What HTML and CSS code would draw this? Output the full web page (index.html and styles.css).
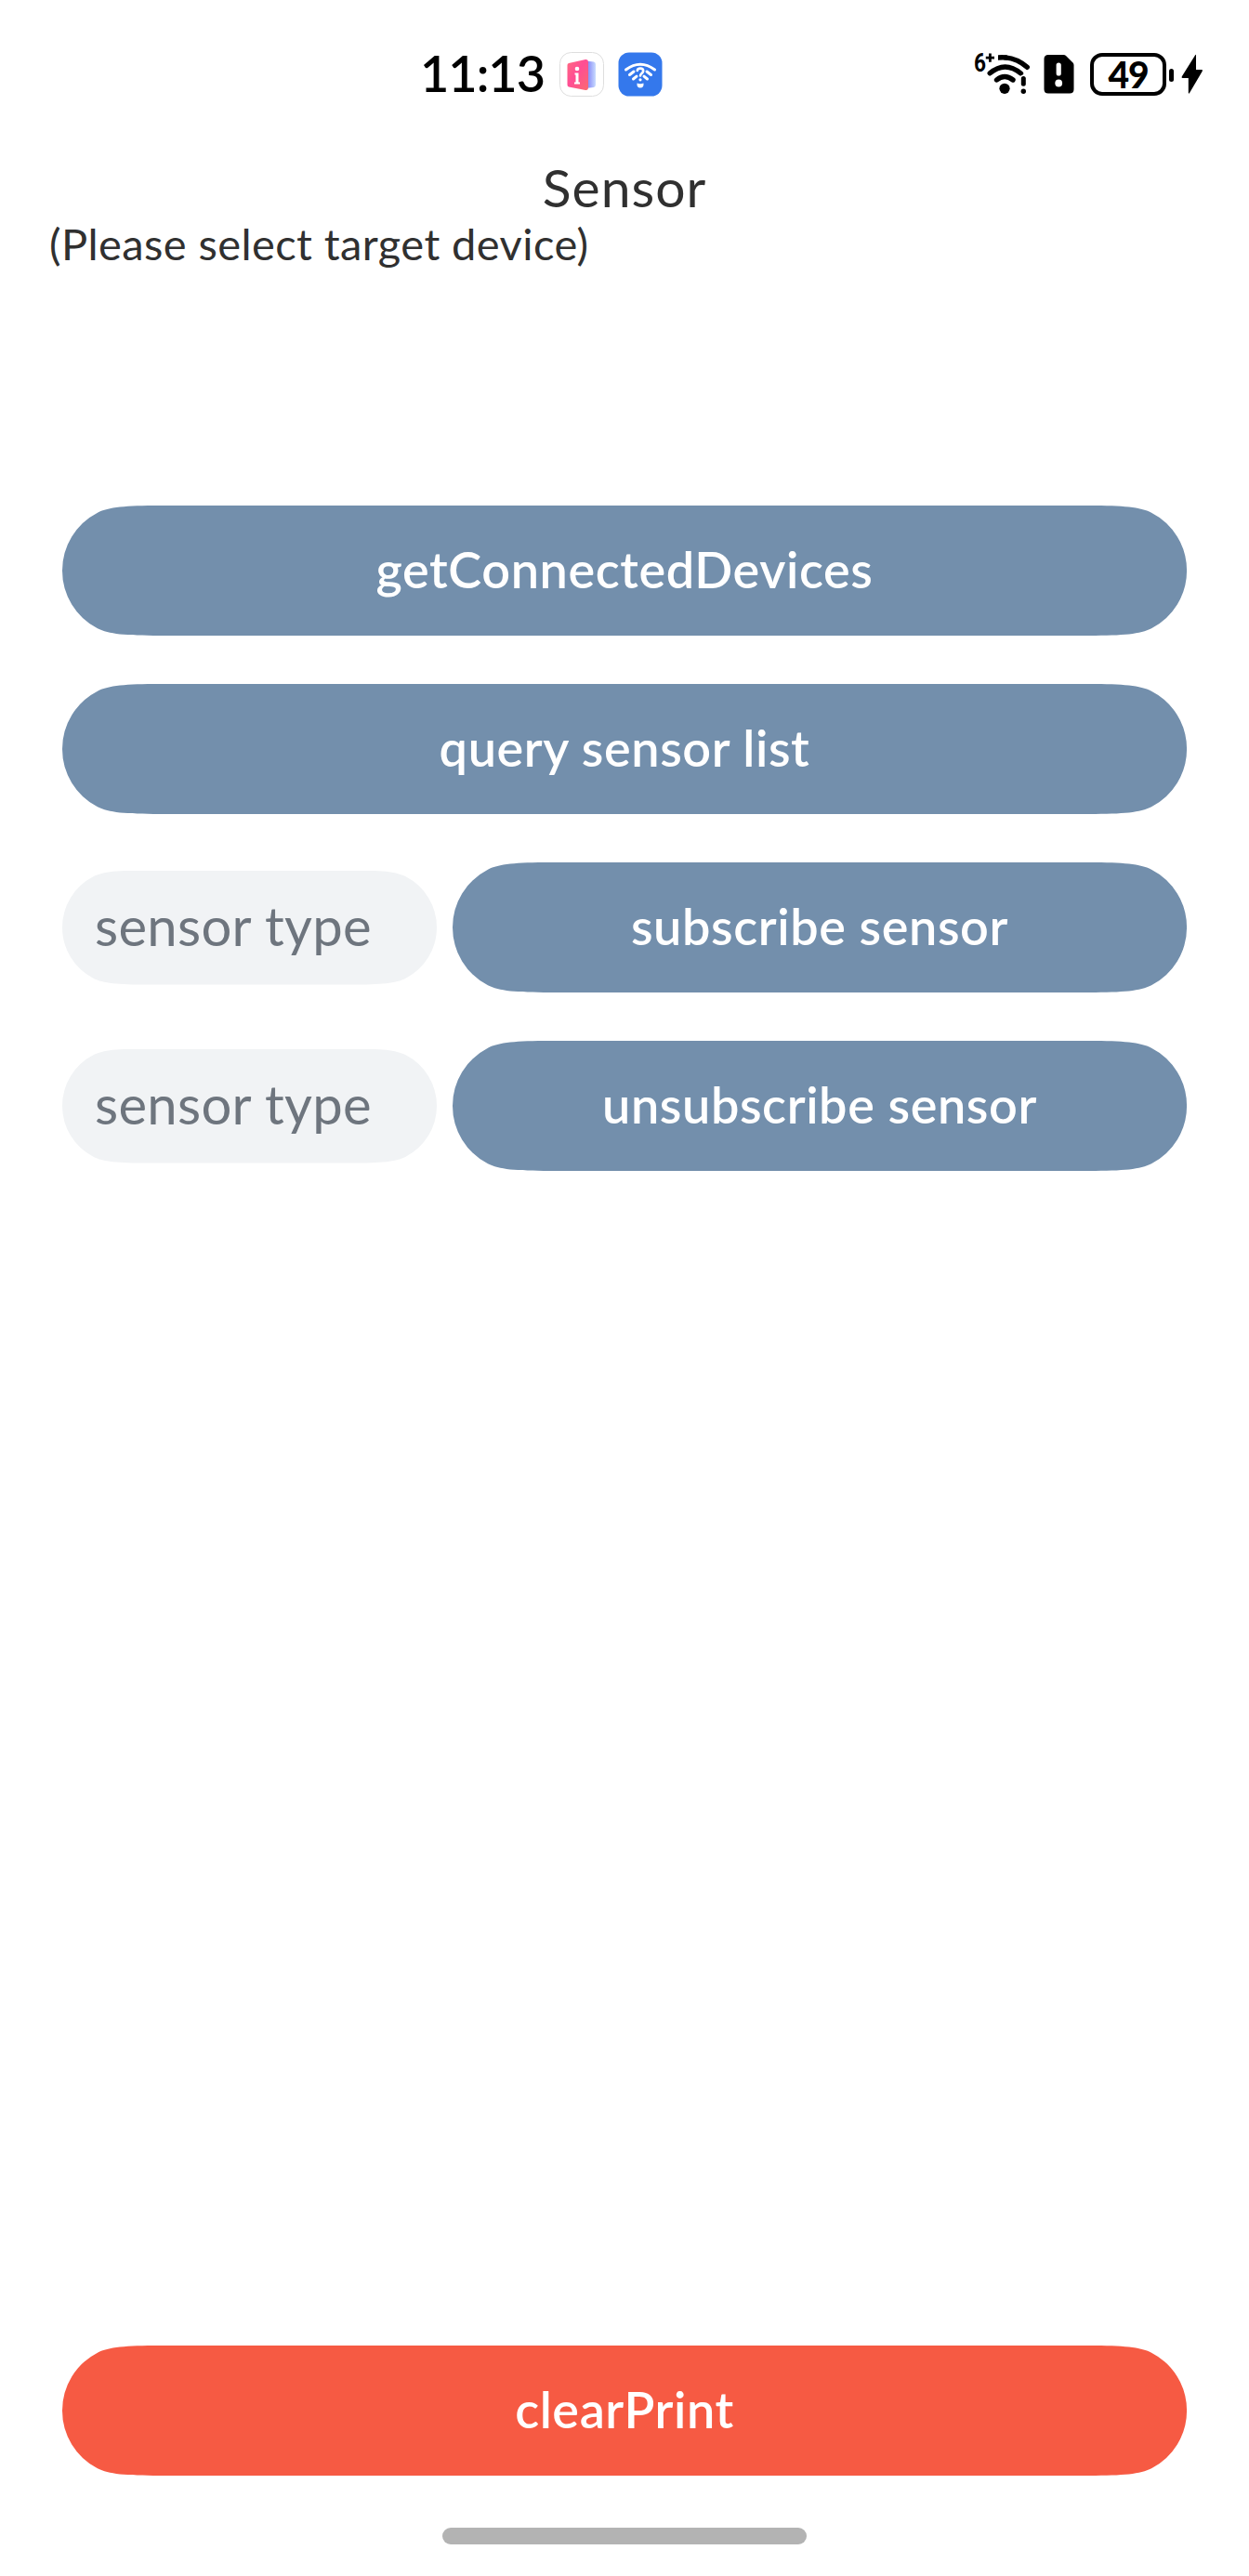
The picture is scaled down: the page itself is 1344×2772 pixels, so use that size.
FILE: index.html
```html
<!DOCTYPE html>
<html lang="en">
<head>
<meta charset="utf-8">
<title>Sensor</title>
<link rel="stylesheet" href="styles.css">
</head>
<body>
<header class="status">
  <div class="status-left">
    <span class="time">11:13</span>
    <svg class="app-icon" width="48" height="48" viewBox="0 0 48 48">
      <defs>
        <linearGradient id="pink" x1="0" y1="0" x2="1" y2="1"><stop offset="0" stop-color="#ff6b80"/><stop offset=".45" stop-color="#ff4d94"/><stop offset="1" stop-color="#fa6a70"/></linearGradient>
        <linearGradient id="violet" x1="0" x2="1"><stop offset="0" stop-color="#7470f4"/><stop offset="1" stop-color="#c9dcff"/></linearGradient>
      </defs>
      <rect x=".5" y=".5" width="47" height="47" rx="12" fill="#fff" stroke="#dedede"/>
      <path d="M28 9.500L37 10.500Q39 11 39 13V35Q39 37.500 37 38L28 39Z" fill="url(#violet)"/>
      <path d="M10 12L28 8Q31 7.500 31 10.500V38Q31 41.500 28 41L10 37.500Q8.500 37 8.500 35V14Q8.500 12.500 10 12Z" fill="url(#pink)"/>
      <circle cx="19" cy="18" r="2.300" fill="#fff"/>
      <path d="M16.500 22.500H20.500V32.500H22V34.500H16V32.500H17.500V24.500H16.500Z" fill="#fff"/>
    </svg>
    <svg class="app-icon" width="48" height="48" viewBox="0 0 48 48">
      <rect x=".5" y=".5" width="47" height="47" rx="11.500" fill="#3478ec"/>
      <g fill="none" stroke="#fff" stroke-width="3" stroke-linecap="round">
        <path d="M8.500 19Q24 7.500 39.500 19"/>
        <path d="M12.500 24.500L17 21M16.500 29L20 26.200M35.500 24.500L31 21M31.500 29L28 26.200"/>
        <path d="M20.800 20C21 16.800 27.200 16.800 27.200 20.300C27.200 23 24 23 24 25.500" stroke-width="2.600"/>
      </g>
      <circle cx="24" cy="29.800" r="1.600" fill="#fff"/>
      <path d="M20.500 33.500Q24 35 27.500 33.500Q28 38.500 24 38.500T20.500 33.500Z" fill="#fff"/>
    </svg>
  </div>
  <div class="status-right">
    <svg width="70" height="60" viewBox="4 0 70 60">
      <text class="wifi-gen" x="8" y="27" textLength="13" lengthAdjust="spacingAndGlyphs">6</text>
      <path d="M20.800 12.200H30M25.400 7.600V16.800" stroke="#000" stroke-width="2.800"/>
      <g fill="none" stroke="#000" stroke-width="5.400" stroke-linecap="round">
        <path d="M32.500 36Q41 29 50 36"/>
        <path d="M25.200 28.800Q41.500 15 58.500 29"/>
        <path d="M42 11.900Q55 13.200 65.300 22.300"/>
      </g>
      <path d="M34 9.300Q39 8.900 44 9.400V14.800Q39 14.200 34 14.800Z"/>
      <circle cx="41" cy="45.300" r="5.600"/>
      <path d="M61.300 34V40" stroke="#fff" stroke-width="7" stroke-linecap="round"/>
      <path d="M61.300 34.500V40.300" stroke="#000" stroke-width="5" stroke-linecap="round"/>
      <circle cx="61.300" cy="48.200" r="2.700"/>
    </svg>
    <svg class="sim" width="33" height="42" viewBox="0 0 33 42">
      <path d="M5 0H21.500Q23 0 24 1L31.500 8.500Q32.500 9.500 32.500 11V37Q32.500 41.500 28 41.500H5Q.5 41.500 .5 37V4.500Q.5 0 5 0Z"/>
      <path d="M16.200 11V20" stroke="#fff" stroke-width="5.200" stroke-linecap="round"/>
      <circle cx="16.200" cy="30.500" r="3.900" fill="#fff"/>
    </svg>
    <div class="battery">49</div>
    <div class="battery-tip"></div>
    <svg class="bolt" width="24" height="44" viewBox="0 0 24 44">
      <path d="M15 1.500Q16 0 16 2V17H22Q23.700 17 22.700 18.700L9 42Q7.800 43.500 7.800 41.500V26H1.500Q0 26 .8 24.300Z"/>
    </svg>
  </div>
</header>
<main class="page">
  <h1 class="title">Sensor</h1>
  <p class="hint">(Please select target device)</p>
  <div class="actions">
    <button class="btn wide">getConnectedDevices</button>
    <button class="btn wide">query sensor list</button>
    <div class="row">
      <input class="field" type="text" placeholder="sensor type">
      <button class="btn narrow">subscribe sensor</button>
    </div>
    <div class="row">
      <input class="field" type="text" placeholder="sensor type">
      <button class="btn narrow">unsubscribe sensor</button>
    </div>
    <button class="btn wide clear">clearPrint</button>
  </div>
</main>
<div class="home-bar"></div>
</body>
</html>
```
FILE: styles.css
```css
* { box-sizing: border-box; }
body {
  margin: 0;
  width: 1344px;
  height: 2772px;
  display: flex;
  flex-direction: column;
  align-items: center;
  background: #fff;
  font-family: Lato, "Open Sans", sans-serif;
  overflow: hidden;
}

.status {
  width: 100%;
  height: 168px;
  padding: 50px 49px 0 452px;
  display: flex;
  justify-content: space-between;
  align-items: flex-start;
}
.status-left, .status-right { display: flex; height: 60px; align-items: center; }
.time {
  width: 150px;
  font-size: 54px;
  font-weight: 600;
  line-height: 60px;
  letter-spacing: -1px;
  padding-bottom: 3px;
  color: #000;
}
.app-icon { margin-right: 15px; }
.wifi-gen { font: 700 28px Roboto, sans-serif; }
.sim { margin-left: 9px; }
.battery {
  margin-left: 17px;
  width: 82px;
  height: 46px;
  border: 4px solid #000;
  border-radius: 13px;
  text-align: center;
  font-size: 39px;
  font-weight: 900;
  line-height: 39px;
  letter-spacing: -1px;
  color: #000;
}
.battery-tip { width: 5px; height: 14px; border-radius: 3px; background: #000; margin: 2px 8px 0 3px; }

.page { width: 1210px; flex: 1; display: flex; flex-direction: column; }
.title {
  margin: 0;
  text-align: center;
  font-size: 57px;
  font-weight: 400;
  line-height: 67px;
  letter-spacing: 1px;
  color: #303030;
}
.hint {
  margin: 0 0 0 -14px;
  font-size: 47px;
  line-height: 54px;
  letter-spacing: .42px;
  color: #303030;
}
.actions { flex: 1; padding-top: 255px; display: flex; flex-direction: column; gap: 52px; }
.row { display: flex; align-items: center; gap: 17px; }

.btn {
  height: 140px;
  padding: 0 0 4px;
  border: 0;
  background: #738fac;
  color: #fff;
  font: 600 54px Lato, "Open Sans", sans-serif;
  letter-spacing: .6px;
}
.wide {
  width: 1210px;
  clip-path: path("M0 70A70 70 0 0 1 38 7.700C50 1.600 68 0 105 0H1105C1142 0 1160 1.600 1172 7.700A70 70 0 0 1 1172 132.300C1160 138.400 1142 140 1105 140H105C68 140 50 138.400 38 132.300A70 70 0 0 1 0 70Z");
}
.narrow {
  width: 790px;
  clip-path: path("M0 70A70 70 0 0 1 38 7.700C50 1.600 68 0 105 0H685C722 0 740 1.600 752 7.700A70 70 0 0 1 752 132.300C740 138.400 722 140 685 140H105C68 140 50 138.400 38 132.300A70 70 0 0 1 0 70Z");
}
.clear { margin-top: auto; background: #f65a43; }
.field {
  width: 403px;
  height: 123px;
  padding: 0 20px 6px 35px;
  border: 0;
  outline: 0;
  background: #f1f3f5;
  font: 400 58px Lato, "Open Sans", sans-serif;
  letter-spacing: .3px;
  clip-path: path("M0 61.500A61.500 61.500 0 0 1 33.400 6.800C43.900 1.400 59.700 0 92 0H311C343.300 0 359.100 1.400 369.600 6.800A61.500 61.500 0 0 1 369.600 116.200C359.100 121.600 343.300 123 311 123H92C59.700 123 43.900 121.600 33.400 116.200A61.500 61.500 0 0 1 0 61.500Z");
}
.field::placeholder { color: #6e757e; opacity: 1; }

.home-bar { width: 392px; height: 18px; margin: 56px 0 34px; border-radius: 9px; background: #b3b3b3; }
```
